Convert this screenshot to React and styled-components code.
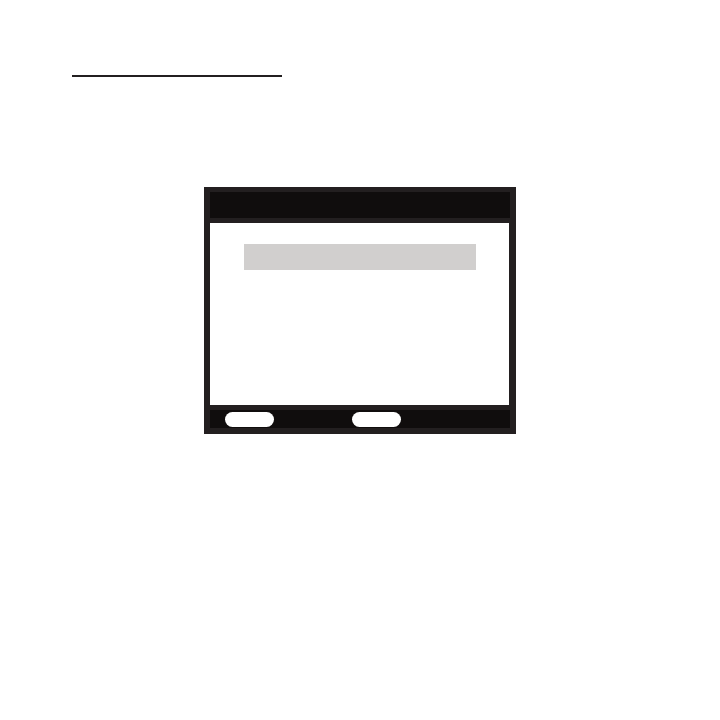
import React from 'react';
import styled, { createGlobalStyle } from 'styled-components';

const GlobalStyle = createGlobalStyle`
  html, body {
    margin: 0;
    padding: 0;
    background: #ffffff;
    font-family: 'Liberation Sans', Arial, sans-serif;
  }
`;

const Page = styled.div`
  width: 720px;
  height: 720px;
  display: flex;
  flex-direction: column;
  align-items: flex-start;
`;

const HeadingRule = styled.div`
  margin: 75px 0 0 72px;
  width: 210px;
  height: 2px;
  background: #231f20;
`;

const Frame = styled.div`
  margin: 110px 0 0 204px;
  width: 312px;
  height: 247px;
  box-sizing: border-box;
  padding: 5px 6px 6px 6px;
  background: #231f20;
  display: flex;
  flex-direction: column;
  gap: 5px;
`;

const TitleBar = styled.div`
  height: 26px;
  background: #100d0d;
`;

const Content = styled.div`
  flex: 1;
  background: #ffffff;
  padding: 21px 0 0 34px;
  margin-right: 1px;
`;

const Highlight = styled.div`
  width: 232px;
  height: 26px;
  background: #d1cfce;
`;

const BottomBar = styled.div`
  height: 18px;
  background: #100d0d;
  display: flex;
  align-items: center;
  padding-left: 15px;
  gap: 78px;
`;

const SoftKey = styled.div`
  width: 49px;
  height: 15px;
  border-radius: 8px;
  background: #ffffff;
`;

export default function App() {
  return (
    <>
      <GlobalStyle />
      <Page>
        <HeadingRule />
        <Frame>
          <TitleBar />
          <Content>
            <Highlight />
          </Content>
          <BottomBar>
            <SoftKey />
            <SoftKey />
          </BottomBar>
        </Frame>
      </Page>
    </>
  );
}
